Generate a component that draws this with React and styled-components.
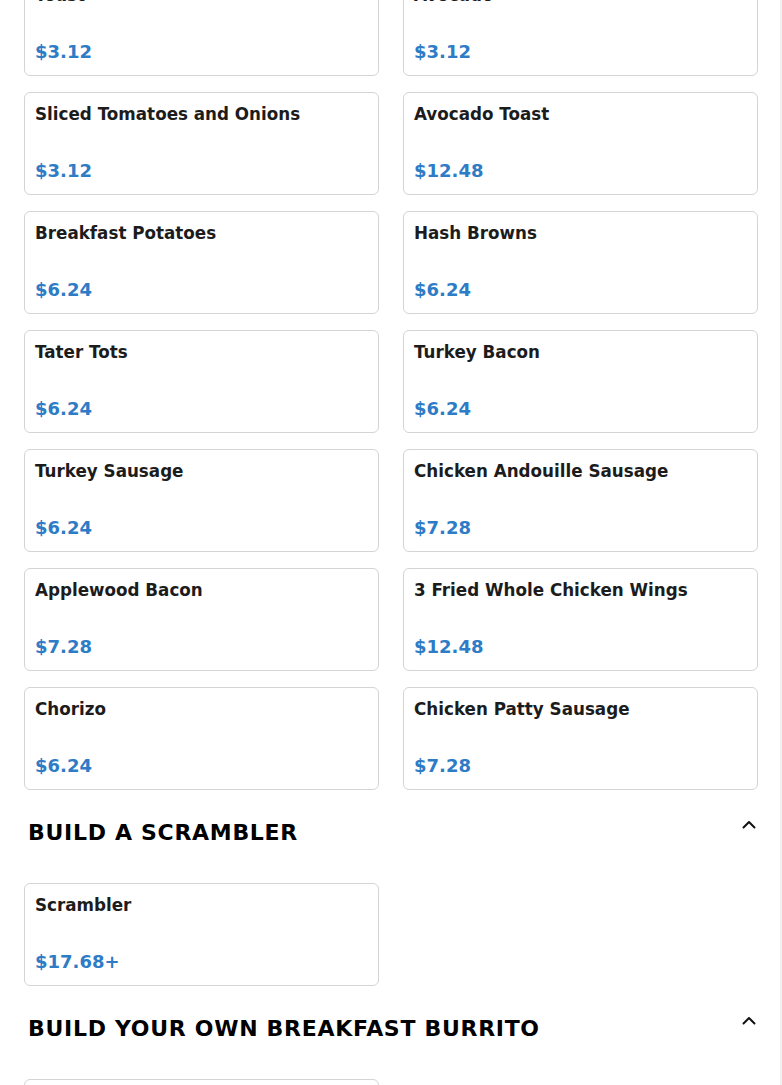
import styled, { createGlobalStyle } from 'styled-components';

const GlobalStyle = createGlobalStyle`
  html, body {
    margin: 0;
    padding: 0;
    background: #ffffff;
    font-family: "DejaVu Sans", "Liberation Sans", sans-serif;
    overflow: hidden;
  }
`;

const sections = [
  {
    title: null,
    items: [
      { name: 'Toast', price: '$3.12' },
      { name: 'Avocado', price: '$3.12' },
      { name: 'Sliced Tomatoes and Onions', price: '$3.12' },
      { name: 'Avocado Toast', price: '$12.48' },
      { name: 'Breakfast Potatoes', price: '$6.24' },
      { name: 'Hash Browns', price: '$6.24' },
      { name: 'Tater Tots', price: '$6.24' },
      { name: 'Turkey Bacon', price: '$6.24' },
      { name: 'Turkey Sausage', price: '$6.24' },
      { name: 'Chicken Andouille Sausage', price: '$7.28' },
      { name: 'Applewood Bacon', price: '$7.28' },
      { name: '3 Fried Whole Chicken Wings', price: '$12.48' },
      { name: 'Chorizo', price: '$6.24' },
      { name: 'Chicken Patty Sausage', price: '$7.28' },
    ],
  },
  {
    title: 'BUILD A SCRAMBLER',
    items: [{ name: 'Scrambler', price: '$17.68+' }],
  },
  {
    title: 'BUILD YOUR OWN BREAKFAST BURRITO',
    items: [{ name: 'Breakfast Burrito', price: '$15.60+' }],
  },
];

const ChevronUp = () => (
  <svg width="16" height="16" viewBox="0 0 16 16" fill="none">
    <path d="M2.5 10.5 L8 5 L13.5 10.5" stroke="#111" strokeWidth="2" strokeLinecap="round" strokeLinejoin="round" />
  </svg>
);

export default function App() {
  return (
    <>
      <GlobalStyle />
      <Page>
        <Menu>
          {sections.map((section, i) => (
            <Section key={i}>
              {section.title && (
                <SectionHeader>
                  <h2>{section.title}</h2>
                  <Toggle type="button" aria-label="Collapse">
                    <ChevronUp />
                  </Toggle>
                </SectionHeader>
              )}
              <Grid>
                {section.items.map((item) => (
                  <Card key={item.name}>
                    <ItemName>{item.name}</ItemName>
                    <Price>{item.price}</Price>
                  </Card>
                ))}
              </Grid>
            </Section>
          ))}
        </Menu>
      </Page>
    </>
  );
}

const Page = styled.div`
  width: 782px;
  min-height: 1085px;
  border-right: 2px solid #f1f1f1;
  box-sizing: border-box;
`;

const Menu = styled.main`
  margin-top: -27px;
  padding: 0 22px 0 24px;
`;

const Section = styled.section`
  display: flex;
  flex-direction: column;
`;

const SectionHeader = styled.div`
  display: flex;
  justify-content: space-between;
  align-items: flex-start;
  margin: 28px 0 35px;
  padding-left: 4px;

  h2 {
    margin: 0;
    font-size: 22px;
    line-height: 30px;
    font-weight: 700;
    letter-spacing: 0.7px;
    color: #000;
  }
`;

const Toggle = styled.button`
  border: none;
  background: transparent;
  padding: 0;
  margin: -1px 1px 0 0;
  width: 16px;
  height: 16px;
  display: flex;
  align-items: center;
  justify-content: center;
  cursor: pointer;
`;

const Grid = styled.div`
  display: grid;
  grid-template-columns: repeat(2, 355px);
  column-gap: 24px;
  row-gap: 16px;
`;

const Card = styled.div`
  border: 1px solid #d4d4d4;
  border-radius: 6px;
  padding: 10px 10px 11px;
  height: 103px;
  box-sizing: border-box;
  display: flex;
  flex-direction: column;
  justify-content: space-between;
  background: #fff;
`;

const ItemName = styled.div`
  font-size: 16.75px;
  line-height: 22px;
  font-weight: 700;
  color: #1c1c1c;
`;

const Price = styled.div`
  font-size: 18px;
  line-height: 24px;
  font-weight: 700;
  color: #2e7bc6;
`;
